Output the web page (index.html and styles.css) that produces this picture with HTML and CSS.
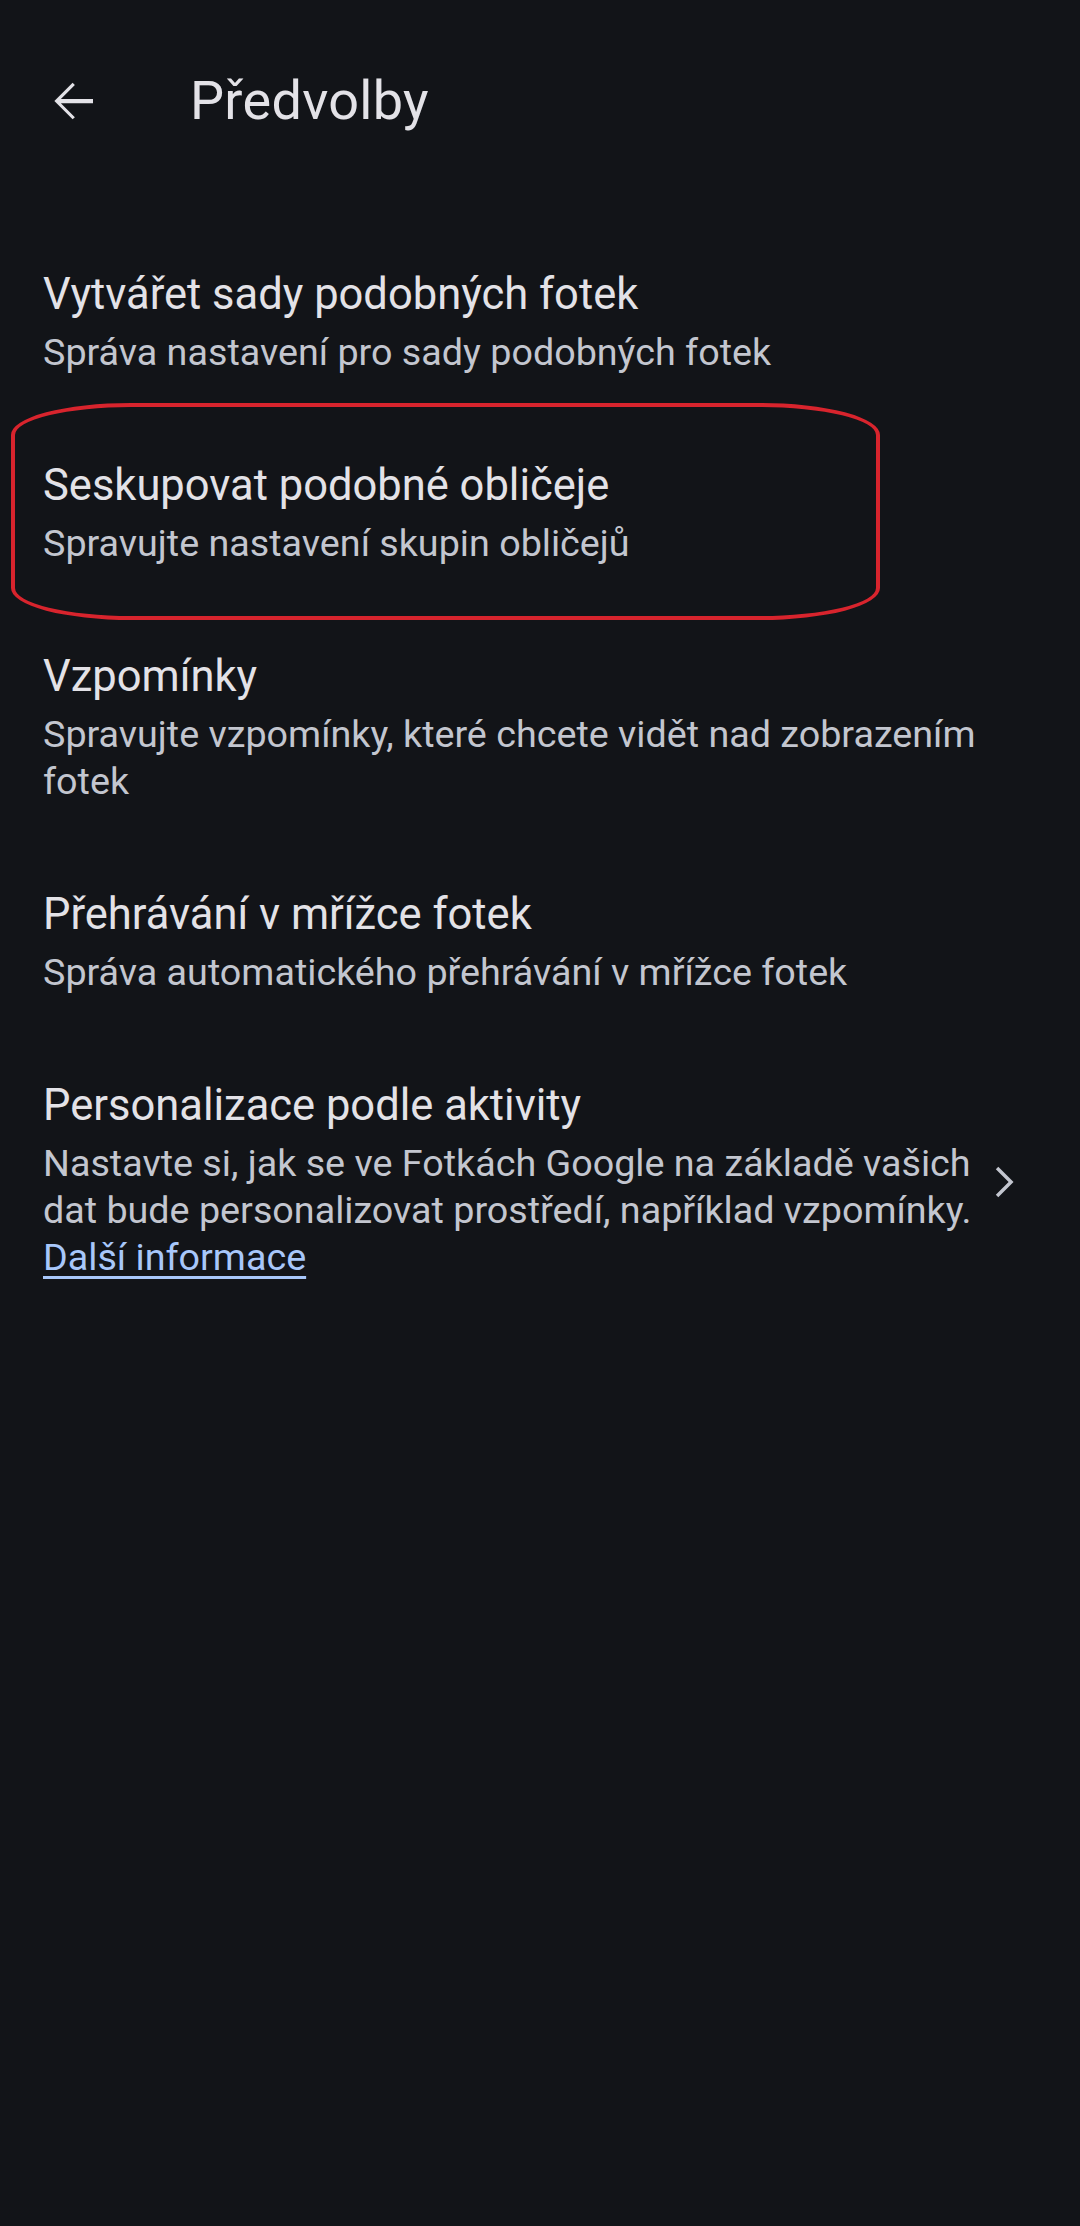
FILE: index.html
```html
<!DOCTYPE html>
<html lang="cs">
<head>
<meta charset="utf-8">
<title>Předvolby</title>
<link rel="stylesheet" href="styles.css">
</head>
<body>
<div class="screen">
  <header class="appbar">
    <button class="back" aria-label="Zpět">
      <svg viewBox="0 0 24 24" width="60" height="60"><path fill="currentColor" d="M20 11.15H7.15l5.6-5.6L11.85 4.7 4.55 12l7.3 7.3.9-.85-5.6-5.6H20z"/></svg>
    </button>
    <h1 class="title">Předvolby</h1>
  </header>
  <main class="list">
    <div class="item">
      <div class="text">
        <div class="item-title">Vytvářet sady podobných fotek</div>
        <div class="item-sub">Správa nastavení pro sady podobných fotek</div>
      </div>
    </div>
    <div class="item highlighted">
      <div class="text">
        <div class="item-title">Seskupovat podobné obličeje</div>
        <div class="item-sub">Spravujte nastavení skupin obličejů</div>
      </div>
      <div class="mark"></div>
    </div>
    <div class="item">
      <div class="text">
        <div class="item-title">Vzpomínky</div>
        <div class="item-sub">Spravujte vzpomínky, které chcete vidět nad zobrazením fotek</div>
      </div>
    </div>
    <div class="item">
      <div class="text">
        <div class="item-title">Přehrávání v mřížce fotek</div>
        <div class="item-sub">Správa automatického přehrávání v mřížce fotek</div>
      </div>
    </div>
    <div class="item with-chevron">
      <div class="text">
        <div class="item-title">Personalizace podle aktivity</div>
        <div class="item-sub">Nastavte si, jak se ve Fotkách Google na základě vašich dat bude personalizovat prostředí, například vzpomínky. <a class="link" href="#">Další informace</a></div>
      </div>
      <svg class="chevron" viewBox="7 0 10 24" width="26" height="62"><path fill="currentColor" d="M9.4 6.1 8.45 7.05 13.4 12l-4.95 4.95.95.95L15.3 12z"/></svg>
    </div>
  </main>
</div>
</body>
</html>
```

FILE: styles.css
```css
html, body {
  margin: 0;
  padding: 0;
  background: #121418;
}

.screen {
  width: 1080px;
  min-height: 2226px;
  background: #121418;
  font-family: Roboto, "Noto Sans", "Liberation Sans", sans-serif;
  color: #e3e2e7;
}

.appbar {
  height: 202px;
  display: flex;
  align-items: center;
  padding-left: 43px;
  box-sizing: border-box;
}

.back {
  width: 60px;
  height: 60px;
  padding: 0;
  margin: 0;
  border: 0;
  background: none;
  color: #e3e2e7;
  display: flex;
}

.title {
  margin: 0 0 0 87px;
  font-size: 54px;
  font-weight: 400;
  line-height: 60px;
  color: #e3e2e7;
  letter-spacing: 0.3px;
}

.list {
  padding-top: 24px;
  display: flex;
  flex-direction: column;
}

.item {
  position: relative;
  display: flex;
  align-items: center;
  padding: 41px 43px;
}

.text {
  flex: 1;
  min-width: 0;
}

.item-title {
  font-size: 43.5px;
  line-height: 56px;
  color: #e3e2e7;
  margin-bottom: 6px;
}

.item-sub {
  font-size: 37.7px;
  line-height: 47px;
  color: #c3c6cf;
}

.link {
  color: #a8c7fa;
  text-decoration: underline;
  text-decoration-thickness: 3px;
  text-underline-offset: 6px;
}

.with-chevron {
  gap: 10px;
  padding-right: 62px;
}

.chevron {
  color: #c3c6cf;
  flex: 0 0 26px;
  margin-top: 4px;
}

.mark {
  position: absolute;
  left: 11px;
  top: -14px;
  width: 869px;
  height: 217px;
  box-sizing: border-box;
  border: 4px solid #d8242d;
  border-radius: 120px / 32px;
  pointer-events: none;
}
```
